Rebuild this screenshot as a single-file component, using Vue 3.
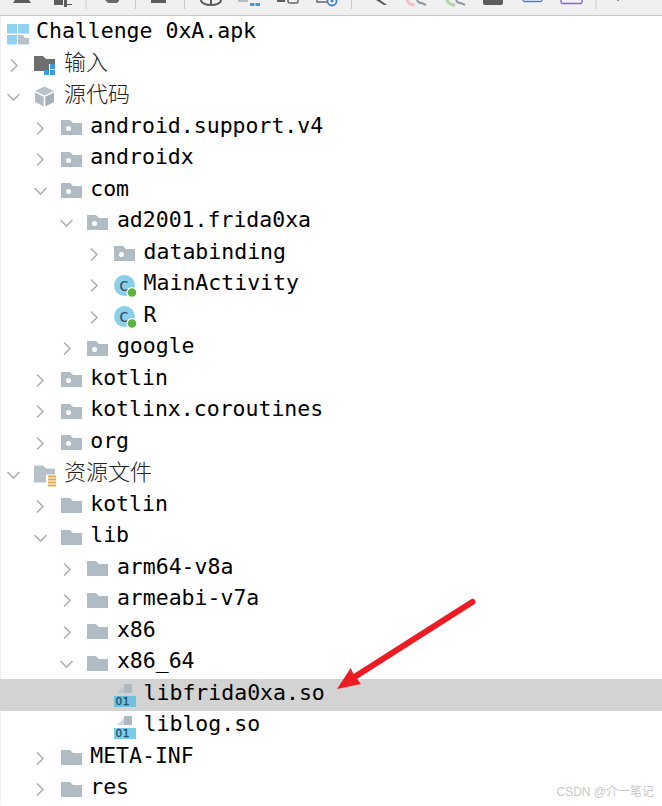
<script setup>
const nodes = [
  { label: 'Challenge 0xA.apk', depth: 0, icon: 'root', root: true },
  { label: '输入', depth: 0, arrow: 'right', icon: 'input', cjk: true },
  { label: '源代码', depth: 0, arrow: 'down', icon: 'box', cjk: true },
  { label: 'android.support.v4', depth: 1, arrow: 'right', icon: 'pkg' },
  { label: 'androidx', depth: 1, arrow: 'right', icon: 'pkg' },
  { label: 'com', depth: 1, arrow: 'down', icon: 'pkg' },
  { label: 'ad2001.frida0xa', depth: 2, arrow: 'down', icon: 'pkg' },
  { label: 'databinding', depth: 3, arrow: 'right', icon: 'pkg' },
  { label: 'MainActivity', depth: 3, arrow: 'right', icon: 'cls' },
  { label: 'R', depth: 3, arrow: 'right', icon: 'cls' },
  { label: 'google', depth: 2, arrow: 'right', icon: 'pkg' },
  { label: 'kotlin', depth: 1, arrow: 'right', icon: 'pkg' },
  { label: 'kotlinx.coroutines', depth: 1, arrow: 'right', icon: 'pkg' },
  { label: 'org', depth: 1, arrow: 'right', icon: 'pkg' },
  { label: '资源文件', depth: 0, arrow: 'down', icon: 'res', cjk: true },
  { label: 'kotlin', depth: 1, arrow: 'right', icon: 'folder' },
  { label: 'lib', depth: 1, arrow: 'down', icon: 'folder' },
  { label: 'arm64-v8a', depth: 2, arrow: 'right', icon: 'folder' },
  { label: 'armeabi-v7a', depth: 2, arrow: 'right', icon: 'folder' },
  { label: 'x86', depth: 2, arrow: 'right', icon: 'folder' },
  { label: 'x86_64', depth: 2, arrow: 'down', icon: 'folder' },
  { label: 'libfrida0xa.so', depth: 3, icon: 'so', selected: true },
  { label: 'liblog.so', depth: 3, icon: 'so' },
  { label: 'META-INF', depth: 1, arrow: 'right', icon: 'folder' },
  { label: 'res', depth: 1, arrow: 'right', icon: 'folder' },
]

const indent = (node) => (node.root ? {} : { paddingLeft: 3 + node.depth * 26.7 + 'px' })
</script>

<template>
  <div class="page">
    <div class="toolbar">
      <svg width="662" height="15" viewBox="0 0 662 15">
        <path d="M15 0h14l2 3H13z" fill="#5c5c5c" />
        <path d="M54 0h9v5h-9zM64 0h3v4h5v1h-5v2h-3z" fill="#5c5c5c" />
        <path d="M105 0h14v1l-2 2h-9z" fill="#6a6a6a" />
        <rect x="151" width="15" height="3" fill="#5c5c5c" />
        <path d="M201 0a10 5 0 0 0 20 0" fill="none" stroke="#5c5c5c" stroke-width="2" />
        <rect x="210" width="2" height="5" fill="#5c5c5c" />
        <rect x="238" width="10" height="2" fill="#b4bdc4" />
        <path d="M250 3h4.500v3H250zM255.500 3h4.500v3h-4.500z" fill="#3d9fd9" />
        <rect x="277" width="8" height="2" fill="#5c5c5c" />
        <path d="M288 0v1a2 2 0 0 0 2 2h6a2 2 0 0 0 2-2V0" fill="none" stroke="#666" stroke-width="1.500" />
        <path d="M317 0v2h11" fill="none" stroke="#666" stroke-width="1.500" />
        <circle cx="332" cy="1" r="4.500" fill="#fff" stroke="#3f7fd8" stroke-width="1.800" />
        <circle cx="332" cy="1" r="1.500" fill="#3f7fd8" />
        <path d="M376 0h4l7 5h-3z" fill="#555" />
        <path d="M407 0c1 3 4 5 8 5" fill="none" stroke="#f3c1c6" stroke-width="3" />
        <path d="M417 0a5 5 0 0 0 5 3l4 2" fill="none" stroke="#8d9aa3" stroke-width="2" />
        <path d="M447 0c1 3 4 5 8 5" fill="none" stroke="#a9d8a6" stroke-width="3" />
        <path d="M456 0a5 5 0 0 0 5 3l4 2" fill="none" stroke="#8d9aa3" stroke-width="2" />
        <path d="M483 0h20v3a2 2 0 0 1-2 2h-16a2 2 0 0 1-2-2z" fill="#5c5c5c" />
        <path d="M523 0a1.500 1.500 0 0 0 1.500 1.500h16a1.500 1.500 0 0 0 1.500-1.500" fill="none" stroke="#3f82e4" stroke-width="1.300" />
        <path d="M561 0v2a1.500 1.500 0 0 0 1.500 1.500h18a1.500 1.500 0 0 0 1.500-1.500V0" fill="none" stroke="#8b5cf0" stroke-width="1.300" />
        <g fill="#c9c9c9">
          <rect x="85.500" width="1" height="9" />
          <rect x="135" width="1" height="9" />
          <rect x="184" width="1" height="9" />
          <rect x="351" width="1" height="9" />
          <rect x="595.500" width="1" height="9" />
        </g>
        <rect x="617" width="2" height="1" fill="#888" />
      </svg>
    </div>

    <div class="tree">
      <div v-for="(node, i) in nodes" :key="i" class="row" :class="{ selected: node.selected, root: node.root }"
        :style="indent(node)">
        <span v-if="!node.root" class="arrow">
          <svg v-if="node.arrow === 'right'" width="10" height="15" viewBox="0 0 10 15">
            <path d="M2 1.500l6 6-6 6" fill="none" stroke="#b0b0b0" stroke-width="1.600" />
          </svg>
          <svg v-else-if="node.arrow === 'down'" width="15" height="10" viewBox="0 0 15 10">
            <path d="M1.500 2l6 6 6-6" fill="none" stroke="#b0b0b0" stroke-width="1.600" />
          </svg>
        </span>

        <svg class="icon" width="22" height="26" viewBox="0 0 22 26">
          <g v-if="node.icon === 'root'">
            <rect x="0" y="3" width="10" height="9.500" fill="#8ed3ef" />
            <rect x="11" y="3" width="11" height="9.500" fill="#8ed3ef" />
            <rect x="0" y="14" width="10" height="9.500" fill="#8ed3ef" />
            <path d="M11 14h5l2 3h4v6.500H11z" fill="#b6c1c8" />
          </g>
          <g v-else-if="node.icon === 'input'">
            <path d="M0 4h9l3 3h9v5h-6v6h-5v1H0z" fill="#6e6e6e" />
            <path d="M16 12h5v5h-5zM10 18h5v5h-5zM16 18h5v5h-5z" fill="#3c9ddb" />
          </g>
          <g v-else-if="node.icon === 'box'">
            <path d="M10.500 2.500l9.500 4.500-9.500 4.500L1 7z" fill="#b9c4ca" />
            <path d="M1 8.500l8.700 4.300v9.700L1 18z" fill="#b0bcc3" />
            <path d="M20 8.500l-8.700 4.300v9.700L20 18z" fill="#a3b0b8" />
          </g>
          <g v-else-if="node.icon === 'pkg' || node.icon === 'folder'">
            <path d="M0 5h9l3 3h9v12H0z" fill="#b0bcc3" />
            <circle v-if="node.icon === 'pkg'" cx="7.500" cy="13.500" r="2.500" fill="#fff" />
          </g>
          <g v-else-if="node.icon === 'res'">
            <path d="M0 3.500h9l3 3h9v14H0z" fill="#b6c1c8" />
            <path d="M12 12.500h10v13H12z" fill="#fff" />
            <path d="M14 13.500h8v2h-8zM14 16.500h8v2h-8zM14 19.500h8v2h-8zM14 22.500h8v2h-8z" fill="#e5a94d" />
          </g>
          <g v-else-if="node.icon === 'cls'">
            <circle cx="10.500" cy="12.500" r="10.500" fill="#8bd0ea" />
            <text x="10" y="17.500" class="cls-letter">c</text>
            <circle cx="18" cy="19.500" r="5.500" fill="#fff" />
            <circle cx="18" cy="19.500" r="4.300" fill="#5fb340" />
          </g>
          <g v-else-if="node.icon === 'so'">
            <path d="M10 11V2h8v9z" fill="#aeb9c0" />
            <path d="M3 11l7-7v7z" :fill="node.selected ? '#bfc7cc' : '#d2d8dc'" />
            <rect x="0" y="14" width="22" height="11" :fill="node.selected ? '#6fbfdd' : '#7acbea'" />
            <text x="1.500" y="23" class="so-bits">01</text>
          </g>
        </svg>

        <span class="label" :class="{ cjk: node.cjk }">{{ node.label }}</span>
      </div>
    </div>

    <svg class="pointer" width="150" height="100" viewBox="0 0 150 100">
      <path d="M6 91L19.700 70L22.500 76L140 1.200A3 3 0 0 1 143.300 6.200L26 81L30 86Z" fill="#ed1c24" />
    </svg>

    <div class="watermark">CSDN @介一笔记</div>
  </div>
</template>

<style scoped>
.page {
  position: relative;
  width: 662px;
  height: 806px;
  overflow: hidden;
  background: #fff;
}

.toolbar {
  height: 15px;
  background: #f0f0f0;
  border-bottom: 1px solid #c6c6c6;
}

.toolbar svg {
  display: block;
}

.tree {
  padding-top: 1.8px;
  border-left: 1px solid #f0f0f0;
}

.row {
  display: flex;
  align-items: center;
  height: 31.5px;
  margin-left: -1px;
}

.row.root {
  padding-left: 7px;
}

.row.selected {
  background: #d3d3d3;
}

.arrow {
  flex: none;
  display: flex;
  align-items: center;
  justify-content: center;
  width: 21px;
  margin-right: 10px;
}

.arrow svg {
  display: block;
}

.icon {
  flex: none;
  display: block;
  margin-right: 7.5px;
}

.row.root .icon {
  margin-right: 7px;
}

.label {
  font-family: "DejaVu Sans Mono", "Liberation Mono", monospace;
  font-size: 21.5px;
  line-height: 26px;
  color: #000;
  white-space: pre;
  margin-bottom: 5px;
}

.label.cjk {
  font-family: "Noto Sans CJK SC", sans-serif;
  font-weight: 300;
  font-size: 22px;
  color: #222;
  margin-left: 0.5px;
  margin-bottom: 10px;
}

.cls-letter {
  font-family: "DejaVu Sans", sans-serif;
  font-size: 17px;
  fill: #3f4f58;
  text-anchor: middle;
}

.so-bits {
  font-family: "DejaVu Sans", sans-serif;
  font-size: 10.5px;
  font-weight: 400;
  letter-spacing: 0.5px;
  fill: #1f4f66;
  stroke: #1f4f66;
  stroke-width: 0.3px;
}

.pointer {
  position: absolute;
  left: 331px;
  top: 598px;
}

.watermark {
  position: absolute;
  right: 8px;
  bottom: 6px;
  font-family: "Liberation Sans", "Noto Sans CJK SC", sans-serif;
  font-size: 12px;
  line-height: 16px;
  color: #c9c9c9;
}
</style>

<style>
html, body {
  margin: 0;
  background: #fff;
}
</style>
